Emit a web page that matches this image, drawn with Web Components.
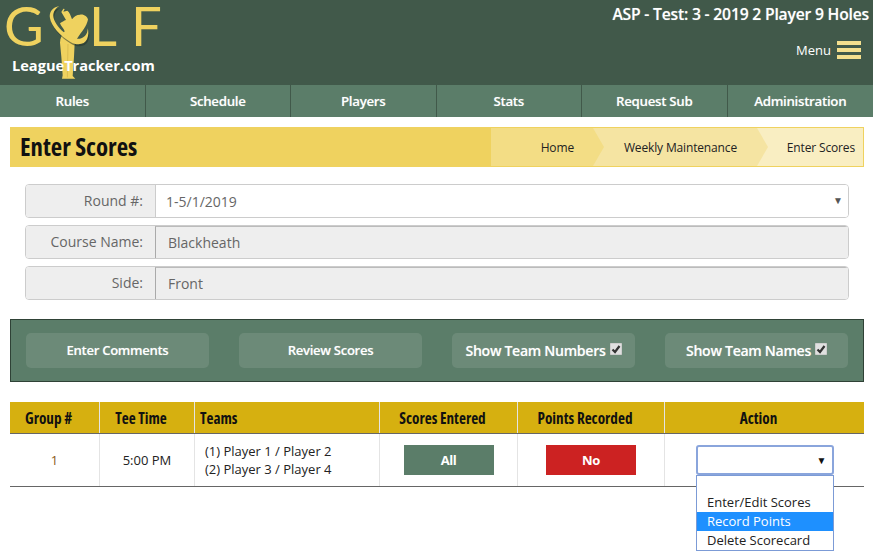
<!DOCTYPE html>
<html>
<head>
<meta charset="utf-8">
<title>Enter Scores</title>
<style>
  html, body { margin: 0; padding: 0; background: #fff; }
  body { font-family: "Open Sans", "Liberation Sans", sans-serif; font-size: 13px; color: #222; }
</style>
</head>
<body>
<site-header></site-header>
<main-nav></main-nav>
<page-title></page-title>
<score-form></score-form>
<action-panel></action-panel>
<score-table></score-table>

<script>
class SiteHeader extends HTMLElement {
  constructor() {
    super();
    this._shadowRoot = this.attachShadow({ mode: 'open' });
  }

  connectedCallback() {
    const ring = 'M58 18C38 22 26 36 30 55C34 78 60 108 90 125C112 138 134 134 141 118C146 106 146 95 143 85C143 98 138 110 124 115C106 121 84 108 66 92C48 74 38 56 40 42C42 32 48 24 58 18Z';
    this._shadowRoot.innerHTML = `<style>
        :host { display: flex; justify-content: space-between; height: 85px; background: #41594a; color: #fff; }
        .logo { position: relative; width: 170px; height: 85px; }
        .golf { display: flex; padding-left: 4px; height: 50px; align-items: center; font-family: "Lato", sans-serif; font-weight: 400; font-size: 54.5px; line-height: 50px; color: #efd25f; }
        .g { width: 85px; }
        .l { width: 42px; }
        .site { position: absolute; left: 12px; top: 55px; font-size: 14.6px; font-weight: 700; line-height: 20px; white-space: nowrap; }
        svg.golfer { position: absolute; left: 40px; top: 0; }
        .right { display: flex; flex-direction: column; align-items: flex-end; padding-right: 4px; }
        .league { font-size: 15.7px; font-weight: 600; line-height: 20px; margin-top: 4px; letter-spacing: -.2px; white-space: nowrap; text-shadow: 0 0 1px rgba(255,255,255,.4); }
        .menu { display: flex; align-items: center; gap: 6px; margin-top: 17px; margin-right: 8px; font-size: 13px; }
        .bars { display: flex; flex-direction: column; gap: 3px; }
        .bars i { display: block; width: 24px; height: 4px; background: #f4df8e; }
      </style>
      <div class="logo">
        <div class="golf"><span class="g">G</span><span class="l">L</span><span>F</span></div>
        <svg class="golfer" width="60" height="85" viewBox="0 0 180 255">
          <path d="M64 36L70 26L74 27L70 35L82 32C88 36 92 46 96 58C102 50 110 44 120 44C132 42 142 50 144 58C142 72 132 88 122 100C114 112 108 120 104 130L102 170L98 228L106 236L66 236L68 226L64 170L60 128C60 116 66 104 74 94C72 86 62 78 60 70C66 66 72 62 78 60C74 52 68 44 64 36Z" fill="#efd25f"/>
          <path d="M84 132L82 232" fill="none" stroke="#cfb24a" stroke-width="2"/>
          <path d="${ring}" fill="#22332a" opacity=".55" transform="translate(3 6)"/>
          <path d="${ring}" fill="#efd25f"/>
        </svg>
        <div class="site">LeagueTracker.com</div>
      </div>
      <div class="right">
        <div class="league">ASP - Test: 3 - 2019 2 Player 9 Holes</div>
        <div class="menu"><span>Menu</span><span class="bars"><i></i><i></i><i></i></span></div>
      </div>`;
  }
}

class MainNav extends HTMLElement {
  constructor() {
    super();
    this._shadowRoot = this.attachShadow({ mode: 'open' });
  }

  connectedCallback() {
    const items = ['Rules', 'Schedule', 'Players', 'Stats', 'Request Sub', 'Administration'];
    this._shadowRoot.innerHTML = `<style>
        :host { display: grid; grid-template-columns: repeat(6, 1fr); height: 32px; background: #5b7d69; color: #fff; }
        div { display: flex; align-items: center; justify-content: center; font-size: 13.3px; font-weight: 600; letter-spacing: -.3px; border-right: 1px solid #41594a; text-shadow: 0 0 1px rgba(255,255,255,.4); }
        div:last-child { border-right: 0; }
      </style>
      ${items.map((item) => `<div>${item}</div>`).join('')}`;
  }
}

class PageTitle extends HTMLElement {
  constructor() {
    super();
    this._shadowRoot = this.attachShadow({ mode: 'open' });
  }

  connectedCallback() {
    this._shadowRoot.innerHTML = `<style>
        :host { display: flex; justify-content: space-between; margin: 10px 9px 0 10px; height: 40px; background: #efd25f; }
        h1 { margin: 0; padding-left: 10px; font-size: 24.8px; line-height: 38px; font-weight: 700; color: #111; font-stretch: 75%; white-space: nowrap; }
        ol { list-style: none; display: flex; margin: 0; padding: 0; width: 372px; height: 38px; border: 1px solid #efd25f; border-left: 0; font-size: 12px; letter-spacing: -.15px; color: #222; }
        li { position: relative; display: flex; align-items: center; justify-content: flex-end; height: 38px; }
        .a { width: 102px; padding-right: 19px; box-sizing: border-box; background: #f3dd85; }
        .b { width: 164px; padding-right: 20px; box-sizing: border-box; background: #f5e4a2; }
        .c { flex: 1; padding-right: 8px; box-sizing: border-box; background: #f9eec2; }
        .a::after, .b::after { content: ""; position: absolute; left: 100%; top: 0; border-style: solid; border-width: 19px 0 19px 11px; border-color: transparent; z-index: 1; }
        .a::after { border-left-color: #f3dd85; }
        .b::after { border-left-color: #f5e4a2; }
      </style>
      <h1>Enter Scores</h1>
      <ol><li class="a">Home</li><li class="b">Weekly Maintenance</li><li class="c">Enter Scores</li></ol>`;
  }
}

class FormRow extends HTMLElement {
  constructor() {
    super();
    this._shadowRoot = this.attachShadow({ mode: 'open' });
  }

  connectedCallback() {
    const open = this.hasAttribute('select');
    this._shadowRoot.innerHTML = `<style>
        :host { display: flex; height: 34px; box-sizing: border-box; border: 1px solid #ccc; border-radius: 4px; overflow: hidden; font-size: 14px; color: #666; }
        .label { width: 129px; flex: none; padding-right: 12px; box-sizing: border-box; text-align: right; line-height: 31px; background: #eee; }
        .value { flex: 1; display: flex; justify-content: space-between; padding-left: 12px; line-height: 31px; background: #eee; border-left: 1px solid #aaa; border-top: 1px solid #bbb; }
        .value.select { background: #fff; border: 0; border-left: 1px solid #ccc; padding-left: 10px; line-height: 33px; }
        .arrow { font-size: 10px; padding-right: 5px; color: #555; line-height: 30px; }
      </style>
      <div class="label"><slot></slot></div>
      <div class="value ${open ? 'select' : ''}"><span>${this.getAttribute('value')}</span>${open ? '<span class="arrow">&#9660;</span>' : ''}</div>`;
  }
}

class ScoreForm extends HTMLElement {
  constructor() {
    super();
    this._shadowRoot = this.attachShadow({ mode: 'open' });
  }

  connectedCallback() {
    this._shadowRoot.innerHTML = `<style>
        :host { display: flex; flex-direction: column; gap: 7px; margin: 17px 24px 0 25px; }
      </style>
      <form-row select value="1-5/1/2019">Round #:</form-row>
      <form-row value="Blackheath">Course Name:</form-row>
      <form-row value="Front">Side:</form-row>`;
  }
}

class ActionPanel extends HTMLElement {
  constructor() {
    super();
    this._shadowRoot = this.attachShadow({ mode: 'open' });
  }

  connectedCallback() {
    const check = `<svg width="12" height="12" viewBox="0 0 12 12"><rect width="12" height="12" rx="1" fill="#e0e0e0" stroke="#bbb"/><path d="M2.5 6.5L5 9L9.5 3" fill="none" stroke="#333" stroke-width="2.2"/></svg>`;
    this._shadowRoot.innerHTML = `<style>
        :host { display: grid; grid-template-columns: repeat(4, 183px); justify-content: space-between; margin: 19px 9px 0 10px; padding: 13px 15px; height: 35px; background: #5b7d69; border: 1px solid #2f4236; }
        div { display: flex; align-items: center; justify-content: center; gap: 4px; height: 35px; border-radius: 5px; background: #6c8a78; color: #fff; font-weight: 600; letter-spacing: -.3px; white-space: nowrap; text-shadow: 0 0 1px rgba(255,255,255,.4); }
        .small { font-size: 13.1px; padding-bottom: 2px; height: 33px; }
        .big { font-size: 14.1px; }
        svg { margin-bottom: 3px; }
      </style>
      <div class="small">Enter Comments</div>
      <div class="small">Review Scores</div>
      <div class="big">Show Team Numbers ${check}</div>
      <div class="big">Show Team Names ${check}</div>`;
  }
}

class ScoreTable extends HTMLElement {
  constructor() {
    super();
    this._shadowRoot = this.attachShadow({ mode: 'open' });
  }

  connectedCallback() {
    this._shadowRoot.innerHTML = `<style>
        :host { display: block; position: relative; height: 156px; margin: 20px 9px 0 10px; font-size: 13px; }
        .row { display: grid; grid-template-columns: 89px 95px 185px 138px 147px 200px; }
        .head { height: 31px; background: #d6b010; border-bottom: 1px solid #666; font-weight: 700; color: #111; }
        .head div { display: flex; align-items: center; justify-content: center; padding-right: 12px; border-left: 1px solid #e4e4e4; overflow: hidden; }
        .head div:first-child { border-left: 0; }
        .head span { font-size: 15.2px; white-space: nowrap; font-stretch: 75%; }
        .head .left { justify-content: flex-start; padding: 0 0 0 5px; }
        .body { height: 52px; border-bottom: 1px solid #666; }
        .body > div { display: flex; align-items: center; justify-content: center; border-left: 1px solid #e4e4e4; }
        .body > div:first-child { border-left: 0; color: #8a5a1a; }
        .teams { justify-content: flex-start !important; padding-left: 10px; line-height: 18px; }
        .status { width: 90px; height: 30px; display: flex; align-items: center; justify-content: center; color: #fff; font-weight: 700; font-size: 13px; letter-spacing: -.4px; }
        .all { background: #5b7d69; }
        .no { background: #cc2222; }
        .select { width: 138px; height: 30px; box-sizing: border-box; border: 2px solid #8aa5dc; border-radius: 3px; display: flex; align-items: center; justify-content: flex-end; padding-right: 5px; font-size: 10px; color: #111; }
        .list { position: absolute; left: 686px; top: 73px; width: 138px; box-sizing: border-box; border: 1px solid #7c9bd6; background: #fff; padding-top: 17px; line-height: 19px; }
        .list div { padding-left: 10px; color: #222; }
        .list .on { background: #1e90ff; color: #fff; }
      </style>
      <div class="row head">
        <div><span>Group #</span></div>
        <div><span>Tee Time</span></div>
        <div class="left"><span>Teams</span></div>
        <div><span>Scores Entered</span></div>
        <div><span>Points Recorded</span></div>
        <div><span>Action</span></div>
      </div>
      <div class="row body">
        <div>1</div>
        <div>5:00 PM</div>
        <div class="teams"><span>(1) Player 1 / Player 2<br>(2) Player 3 / Player 4</span></div>
        <div><span class="status all">All</span></div>
        <div><span class="status no">No</span></div>
        <div><span class="select">&#9660;</span></div>
      </div>
      <div class="list"><div>Enter/Edit Scores</div><div class="on">Record Points</div><div>Delete Scorecard</div></div>`;
  }
}

customElements.define('site-header', SiteHeader);
customElements.define('main-nav', MainNav);
customElements.define('page-title', PageTitle);
customElements.define('form-row', FormRow);
customElements.define('score-form', ScoreForm);
customElements.define('action-panel', ActionPanel);
customElements.define('score-table', ScoreTable);
</script>
</body>
</html>
